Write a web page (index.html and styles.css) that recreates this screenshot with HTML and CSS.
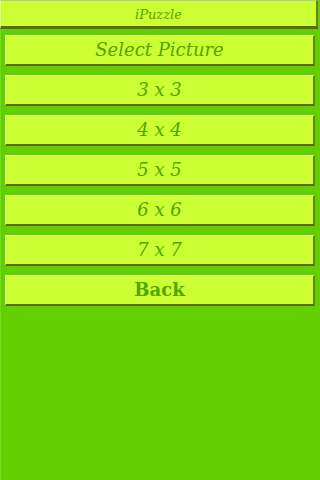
FILE: index.html
```html
<!DOCTYPE html>
<html>
<head>
<meta charset="utf-8">
<link rel="stylesheet" href="styles.css">
</head>
<body>
<div class="screen">
  <div class="titlebar">iPuzzle</div>
  <div class="menu">
    <div class="btn">Select Picture</div>
    <div class="btn">3 x 3</div>
    <div class="btn">4 x 4</div>
    <div class="btn">5 x 5</div>
    <div class="btn">6 x 6</div>
    <div class="btn">7 x 7</div>
    <div class="btn bold">Back</div>
  </div>
</div>
</body>
</html>
```
FILE: styles.css
```css
html, body {
  margin: 0;
  padding: 0;
  background: #63cf00;
}
.screen {
  width: 320px;
  height: 480px;
  box-sizing: border-box;
  border-left: 1px solid #79d823;
  background: #63cf00;
  font-family: "DejaVu Serif", serif;
}
.titlebar {
  width: 318px;
  height: 29px;
  box-sizing: border-box;
  margin-left: -1px;
  background: #ccff33;
  border-top: 1px solid #b8c79a;
  border-left: 1px solid #e6ff99;
  border-right: 2px solid #6b7d1f;
  border-bottom: 3px solid #5a6b12;
  color: #55a300;
  font-style: italic;
  font-size: 13px;
  text-align: center;
  line-height: 28px;
}
.menu {
  display: flex;
  flex-direction: column;
  gap: 9px;
  padding: 6px 0 0 4px;
}
.btn {
  width: 310px;
  height: 31px;
  box-sizing: border-box;
  background: #ccff33;
  border-top: 1px solid #e8ff9e;
  border-left: 1px solid #e8ff9e;
  border-right: 2px solid #6b7d1f;
  border-bottom: 2px solid #5a6b12;
  color: #55a300;
  font-style: italic;
  font-size: 18px;
  text-align: center;
  line-height: 28px;
}
.btn.bold {
  font-style: normal;
  font-weight: bold;
}
```
